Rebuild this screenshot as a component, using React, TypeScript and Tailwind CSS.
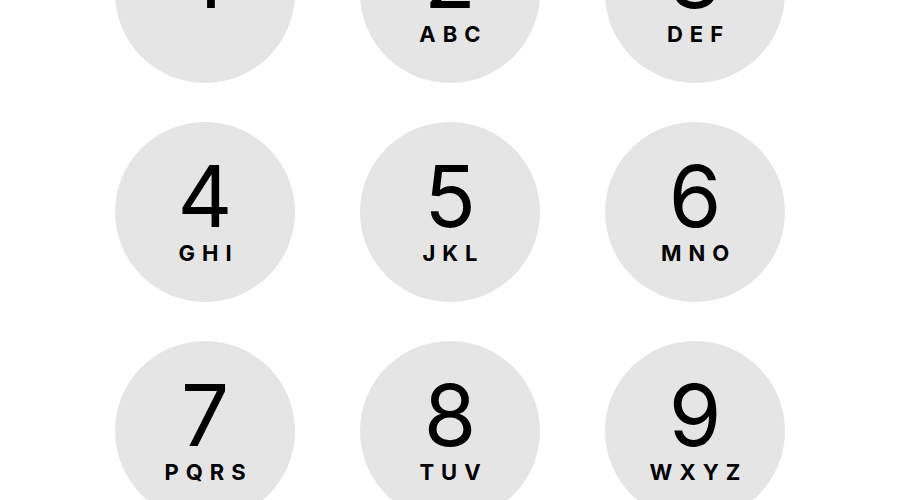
const keys = [
  { digit: "1", letters: "" },
  { digit: "2", letters: "ABC" },
  { digit: "3", letters: "DEF" },
  { digit: "4", letters: "GHI" },
  { digit: "5", letters: "JKL" },
  { digit: "6", letters: "MNO" },
  { digit: "7", letters: "PQRS" },
  { digit: "8", letters: "TUV" },
  { digit: "9", letters: "WXYZ" },
];

function Key({ digit, letters }: { digit: string; letters: string }) {
  return (
    <button className="flex h-[180px] w-[180px] flex-col items-center rounded-full bg-[#e5e5e5] pt-[40px] text-black">
      <span className="block text-[85px] font-normal leading-[70px]">{digit}</span>
      {letters && (
        <span className="mt-[11px] block pl-[7px] text-[22px] font-bold leading-[20px] tracking-[7px]">
          {letters}
        </span>
      )}
    </button>
  );
}

export default function App() {
  return (
    <div className="h-[500px] w-[900px] overflow-hidden bg-white font-['Inter','Liberation_Sans',sans-serif]">
      <div className="-mt-[97px] grid grid-cols-[repeat(3,180px)] justify-center gap-x-[65px] gap-y-[39px]">
        {keys.map((k) => (
          <Key key={k.digit} {...k} />
        ))}
      </div>
    </div>
  );
}
